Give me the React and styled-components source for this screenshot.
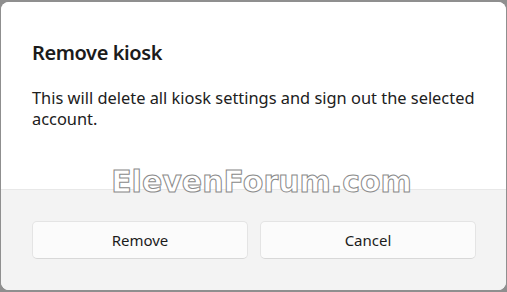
import React from 'react'
import styled, { createGlobalStyle } from 'styled-components'

const GlobalStyle = createGlobalStyle`
  html, body {
    margin: 0;
    padding: 0;
    background: #8f8f8f;
  }
  body {
    width: 507px;
    height: 292px;
    overflow: hidden;
  }
`

const Backdrop = styled.div`
  width: 507px;
  height: 292px;
  padding: 2px 1px 2px 1px;
  box-sizing: border-box;
`

const Dialog = styled.div`
  position: relative;
  width: 100%;
  height: 100%;
  display: flex;
  flex-direction: column;
  background: #ffffff;
  border-radius: 8px;
  overflow: hidden;
  font-family: 'Noto Sans', 'Open Sans', sans-serif;
  color: #1b1b1b;
`

const Content = styled.div`
  height: 187px;
  box-sizing: border-box;
  padding: 37px 30px 0 31px;
  background: #ffffff;
`

const Title = styled.h2`
  margin: 0 0 20px 0;
  font-size: 20px;
  line-height: 28px;
  font-weight: 600;
  letter-spacing: -0.4px;
`

const Message = styled.p`
  margin: 0;
  font-size: 16.4px;
  line-height: 21px;
  font-weight: 400;
  color: #202020;
`

const Footer = styled.div`
  flex: 1;
  display: grid;
  grid-template-columns: 1fr 1fr;
  gap: 12px;
  align-items: start;
  padding: 31px 30px 0 31px;
  background: #f3f3f3;
  border-top: 1px solid #e8e8e8;
`

const Button = styled.button`
  height: 38px;
  border: 1px solid #e4e4e4;
  border-bottom-color: #d8d8d8;
  border-radius: 5px;
  background: #fbfbfb;
  font-family: inherit;
  font-size: 15px;
  color: #1b1b1b;
  cursor: pointer;
`

const Watermark = styled.div`
  position: absolute;
  left: 0;
  right: 0;
  top: 162px;
  padding-left: 16px;
  text-align: center;
  font-family: 'DejaVu Sans', sans-serif;
  font-size: 30px;
  font-weight: 700;
  letter-spacing: 0px;
  color: #ffffff;
  -webkit-text-stroke: 1px #8a8a8a;
  pointer-events: none;
`

export default function App() {
  return (
    <>
      <GlobalStyle />
      <Backdrop>
        <Dialog>
          <Content>
            <Title>Remove kiosk</Title>
            <Message>
              This will delete all kiosk settings and sign out the selected account.
            </Message>
          </Content>
          <Footer>
            <Button>Remove</Button>
            <Button>Cancel</Button>
          </Footer>
          <Watermark>ElevenForum.com</Watermark>
        </Dialog>
      </Backdrop>
    </>
  )
}
